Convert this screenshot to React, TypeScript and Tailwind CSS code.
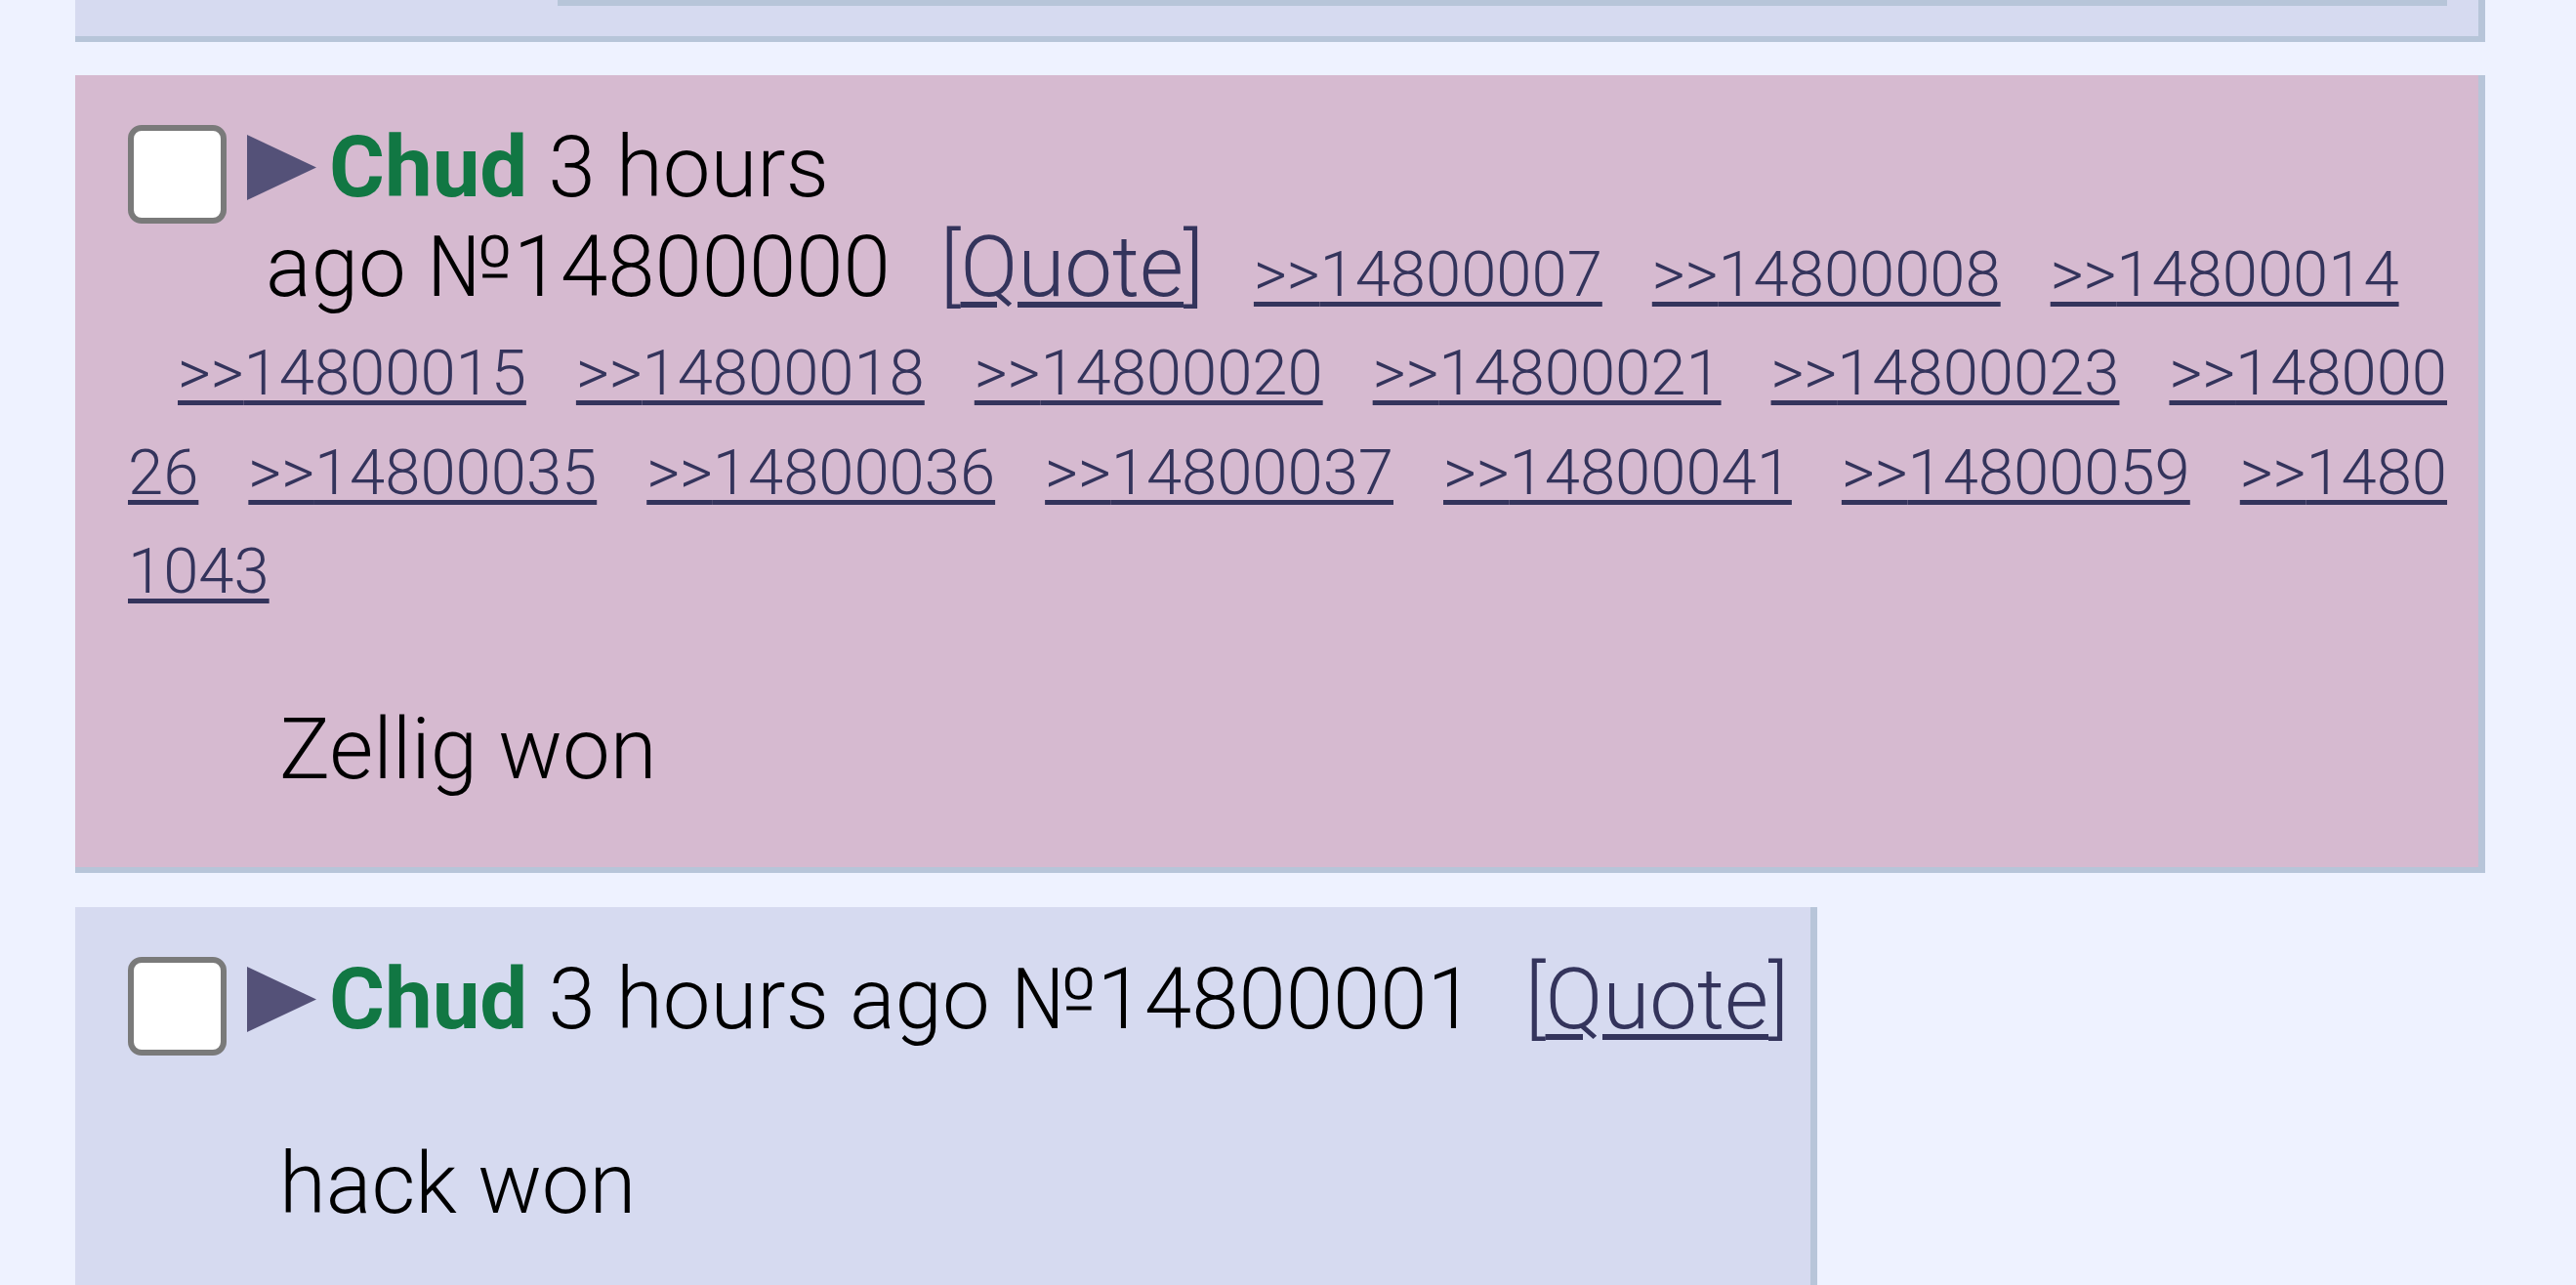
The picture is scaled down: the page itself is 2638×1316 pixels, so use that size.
import React from 'react';

// ─── data ─────────────────────────────────────────────────────────────────────
const LINE2 = ['14800007', '14800008', '14800014'];
const LINE3 = ['14800015', '14800018', '14800020', '14800021', '14800023'];
const LINE4 = ['14800035', '14800036', '14800037', '14800041', '14800059'];

const linkCls =
  'text-[#34345c] underline [text-decoration-thickness:5px] underline-offset-[6px] [text-decoration-skip-ink:auto]';

// ─── bits ─────────────────────────────────────────────────────────────────────
function Checkbox() {
  return (
    <span className="mt-[7px] block h-[101px] w-[101px] shrink-0 rounded-[14px] border-[6px] border-[#7a7a7a] bg-white" />
  );
}

function MenuArrow() {
  return (
    <svg viewBox="0 0 71 67" className="ml-[21px] mt-[17px] block h-[67px] w-[71px] shrink-0">
      <polygon points="0,0 71,33.5 0,67" fill="#545178" />
    </svg>
  );
}

function Backlink({ n, first }: { n: string; first?: boolean }) {
  return (
    <a className={`${first ? '' : 'ml-[51px]'} text-[65.2px] ${linkCls}`}>&gt;&gt;{n}</a>
  );
}

function QuoteLink() {
  return (
    <span className="text-[#34345c]">
      [<a className="underline [text-decoration-thickness:6px] underline-offset-[6px]">Quote</a>]
    </span>
  );
}

function Header({ children }: { children?: React.ReactNode }) {
  return (
    <div className="flex h-[101.5px] whitespace-nowrap">
      <Checkbox />
      <MenuArrow />
      <span className="ml-[13px] leading-[101.5px]">
        <span className="font-bold text-[#117743]">Chud</span> {children}
      </span>
    </div>
  );
}

// ─── page ─────────────────────────────────────────────────────────────────────
export default function App() {
  return (
    <div className="h-[1316px] overflow-hidden bg-[#eef2ff] pl-[77px] font-['Roboto',sans-serif] text-[87px] font-light text-black">
      {/* tail of the previous post */}
      <div className="h-[43px] w-[2468px] border-r-[7px] border-b-[6px] border-[#b7c5d9] bg-[#d6daf0]">
        <div className="ml-[494px] h-[6px] w-[1935px] bg-[#b7c5d9]" />
      </div>

      {/* highlighted post */}
      <div className="mt-[34px] w-[2468px] border-r-[7px] border-b-[6px] border-[#b7c5d9] bg-[#d6bad0] pt-[44px] pr-[31px] pb-[70px] pl-[54px]">
        <Header>3 hours</Header>
        <div className="h-[101.5px] whitespace-nowrap pl-[141px] leading-[101.5px]">
          ago №14800000
          <span className="ml-[51px]">
            <QuoteLink />
          </span>
          {LINE2.map((n) => (
            <Backlink key={n} n={n} />
          ))}
        </div>
        <div className="h-[101.5px] whitespace-nowrap leading-[101.5px]">
          {LINE3.map((n) => (
            <Backlink key={n} n={n} />
          ))}
          <Backlink n="148000" />
        </div>
        <div className="h-[101.5px] whitespace-nowrap leading-[101.5px]">
          <a className={`text-[65.2px] ${linkCls}`}>26</a>
          {LINE4.map((n) => (
            <Backlink key={n} n={n} />
          ))}
          <Backlink n="1480" />
        </div>
        <div className="h-[101.5px] whitespace-nowrap leading-[101.5px]">
          <a className={`text-[65.2px] ${linkCls}`}>1043</a>
        </div>
        <p className="mt-[88px] pl-[155px] leading-[101.5px]">Zellig won</p>
      </div>

      {/* next post */}
      <div className="mt-[35px] w-fit border-r-[7px] border-b-[6px] border-[#b7c5d9] bg-[#d6daf0] pt-[44px] pr-[22px] pb-[70px] pl-[54px]">
        <Header>
          3 hours ago №14800001
          <span className="ml-[52px]">
            <QuoteLink />
          </span>
        </Header>
        <p className="mt-[87px] pl-[155px] leading-[101.5px]">hack won</p>
      </div>
    </div>
  );
}
